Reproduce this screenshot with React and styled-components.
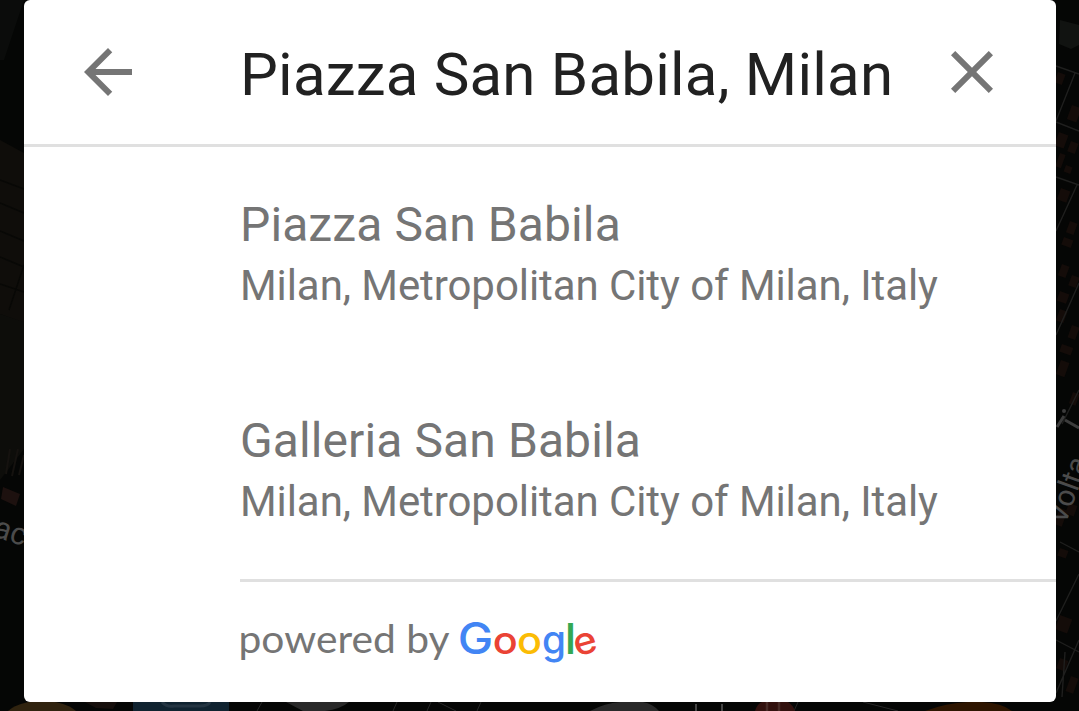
import React from "react";
import styled, { createGlobalStyle } from "styled-components";

const GlobalStyle = createGlobalStyle`
  * { box-sizing: border-box; }
  html, body { margin: 0; background: #050605; overflow: hidden; }
  body { font-family: Roboto, "Liberation Sans", sans-serif; }
`;

const Screen = styled.div`
  position: relative;
  width: 1079px;
  height: 711px;
  padding: 0 23px 9px 24px;
  overflow: hidden;
`;

const MapLayer = styled.svg`
  position: absolute;
  inset: 0;
  width: 1079px;
  height: 711px;
`;

const Card = styled.section`
  position: relative;
  display: flex;
  flex-direction: column;
  height: 702px;
  background: #fff;
  border-radius: 6px;
  overflow: hidden;
`;

const SearchBar = styled.header`
  display: flex;
  align-items: center;
  height: 147px;
  padding: 0 48px;
  border-bottom: 3px solid #e0e0e0;
`;

const IconButton = styled.button`
  display: flex;
  flex: none;
  width: 72px;
  height: 72px;
  padding: 0;
  border: 0;
  background: none;
  color: #757575;

  svg { width: 72px; height: 72px; fill: currentColor; }
`;

const Query = styled.div`
  flex: 1;
  margin-left: 96px;
  padding-top: 5px;
  color: #212121;
  font-size: 60px;
  line-height: 70px;
  letter-spacing: 0.22px;
  white-space: nowrap;
`;

const Results = styled.ul`
  margin: 0;
  padding: 0;
  list-style: none;
`;

const Result = styled.li`
  height: 216px;
  padding: 48px 0 0 216px;
  color: #757575;
  white-space: nowrap;
`;

const PlaceName = styled.div`
  font-size: 48px;
  line-height: 60px;
  letter-spacing: 0.1px;
`;

const PlaceAddress = styled.div`
  font-size: 42px;
  line-height: 62px;
  letter-spacing: -0.075px;
`;

const Attribution = styled.footer`
  flex: 1;
  margin-left: 216px;
  border-top: 3px solid #e0e0e0;
`;

const PoweredBy = styled.svg`
  display: block;
  width: 380px;
  height: 120px;
  overflow: visible;
  font-family: Lato, "Liberation Sans", sans-serif;
`;

const LogoLetter = styled.text`
  font-family: Inter, "Liberation Sans", sans-serif;
  font-weight: 500;
`;

const places = [
  { name: "Piazza San Babila", address: "Milan, Metropolitan City of Milan, Italy" },
  { name: "Galleria San Babila", address: "Milan, Metropolitan City of Milan, Italy" },
];

const logoLetters = [
  { char: "G", x: 217.8, width: 35.5, size: 43.5, color: "#4285f4" },
  { char: "o", x: 252.8, width: 25, size: 38, color: "#ea4335" },
  { char: "o", x: 277, width: 25, size: 38, color: "#fbbc05" },
  { char: "g", x: 302, width: 24, size: 39, color: "#4285f4" },
  { char: "l", x: 324.7, width: 11.5, size: 43, color: "#34a853" },
  { char: "e", x: 333.2, width: 23.5, size: 37.5, color: "#ea4335", tilt: -16 },
];

const roofs = [
  [1058, 72, 8, 11], [1072, 105, 10, 15], [1059, 132, 10, 14], [1071, 141, 8, 11],
  [1060, 153, 6, 14], [1066, 165, 7, 7], [1061, 188, 10, 12], [1070, 221, 8, 12],
  [1064, 237, 10, 8], [1062, 264, 8, 12], [1072, 275, 8, 11], [1060, 291, 10, 10],
  [1060, 309, 8, 12], [1072, 325, 8, 13], [1062, 344, 12, 8], [1061, 360, 9, 15],
  [1073, 392, 7, 12], [1060, 508, 8, 17], [1069, 503, 9, 11], [1060, 548, 9, 8],
  [1060, 615, 13, 15], [1060, 658, 9, 11], [1071, 676, 8, 16],
];

function MapBackdrop() {
  return (
    <MapLayer viewBox="0 0 1079 711" aria-hidden="true">
      <rect width="1079" height="711" fill="#050605" />
      <path d="M0 0h24L4 60H0z" fill="#0b0c0b" />
      <path d="M0 140l24 13v170L0 314z" fill="#0f0d0a" />
      <path d="M0 314l24 8v127L0 480z" fill="#0d0d0a" />
      <path d="M0 180l24 9M0 203l24 10M0 231l24 10M0 257l24 10M0 284l24 8M24 265L9 310" stroke="#080806" strokeWidth="1.5" fill="none" />
      <path d="M3 487l17 7-4 12-15-7z" fill="#1d110f" />
      <path d="M10 449l-4 25M18 449l-6 27M24 455l-5 20" stroke="#15120f" strokeWidth="2" />
      <text x="-8" y="536" transform="rotate(18 -8 536)" fontSize="31" fill="#4b4b4b">ac</text>
      <path d="M1060 20l19 5v20l-8 4-12-5z" fill="#111311" />
      <g fill="#140c09">
        {roofs.map(([x, y, w, h]) => (
          <rect key={`${x}-${y}`} x={x} y={y} width={w} height={h} transform={`rotate(20 ${x} ${y})`} />
        ))}
      </g>
      <path d="M1056 66l23 8M1075 73l-19 48M1056 122l23 9M1056 177l23 8M1077 185l-21 46M1079 283l-23 52M1079 390l-17 34M1060 542l19 10M1079 574l-23 47M1056 640l23 12M1079 640l-23 53M1065 652l-3 45" fill="none" stroke="#1f1f1e" strokeWidth="1.4" />
      <text x="1065" y="526" transform="rotate(-70 1065 526)" fontSize="30" fill="#4b4b4b">Volta</text>
      <path d="M1065 420l14 8M1057 427l7-11" stroke="#3c3c3c" strokeWidth="3" />
      <circle cx="1064" cy="411" r="2" fill="#3c3c3c" />
      <ellipse cx="42" cy="719" rx="38" ry="18" fill="#30230f" />
      <path d="M85 702h32l-4 7-17-1z" fill="#160f0c" />
      <path d="M133 702h96v9h-96z" fill="#102330" />
      <path d="M162 702q4 5 12 4h26q8 0 10-4" fill="none" stroke="#243542" strokeWidth="3" />
      <path d="M286 702h63q-8 7-24 9h-22z" fill="#292929" />
      <path d="M590 711q15-8 30-9h23q10 2 16 9z" fill="#292929" />
      <path d="M262 702l-5 9M397 702l-4 9M431 702l-4 9M438 702l18 9M481 702l-4 9M798 702l-4 9M863 702l35 9" stroke="#272727" />
      <path d="M696 704v7M722 704v7" stroke="#444" strokeWidth="2" />
      <path d="M755 711q2-7 7-9h26q5 3 7 9z" fill="#32110e" />
      <path d="M767 702v9M779 702v9" stroke="#482b27" strokeWidth="2.5" />
      <path d="M925 711q21-8 43-9h14q20 1 30 9z" fill="#2e1500" />
    </MapLayer>
  );
}

export default function App() {
  return (
    <>
      <GlobalStyle />
      <Screen>
        <MapBackdrop />
        <Card>
          <SearchBar>
            <IconButton aria-label="Back">
              <svg viewBox="0 0 24 24">
                <path d="M20 11H7.83l5.59-5.59L12 4l-8 8 8 8 1.41-1.41L7.83 13H20v-2z" />
              </svg>
            </IconButton>
            <Query>Piazza San Babila, Milan</Query>
            <IconButton aria-label="Clear">
              <svg viewBox="0 0 24 24">
                <path d="M19 6.41L17.59 5 12 10.59 6.41 5 5 6.41 10.59 12 5 17.59 6.41 19 12 13.41 17.59 19 19 17.59 13.41 12z" />
              </svg>
            </IconButton>
          </SearchBar>
          <Results>
            {places.map((place) => (
              <Result key={place.name}>
                <PlaceName>{place.name}</PlaceName>
                <PlaceAddress>{place.address}</PlaceAddress>
              </Result>
            ))}
          </Results>
          <Attribution>
            <PoweredBy viewBox="0 0 380 120">
              <text
                x="-1.5"
                y="71"
                fontSize="38"
                fill="#757575"
                textLength="211"
                lengthAdjust="spacingAndGlyphs"
              >
                powered by
              </text>
              {logoLetters.map(({ char, x, width, size, color, tilt }, i) => (
                <LogoLetter
                  key={i}
                  x={x}
                  y="72"
                  fontSize={size}
                  fill={color}
                  textLength={width}
                  lengthAdjust="spacingAndGlyphs"
                  transform={tilt ? `rotate(${tilt} ${x + width / 2} 61)` : undefined}
                >
                  {char}
                </LogoLetter>
              ))}
            </PoweredBy>
          </Attribution>
        </Card>
      </Screen>
    </>
  );
}
